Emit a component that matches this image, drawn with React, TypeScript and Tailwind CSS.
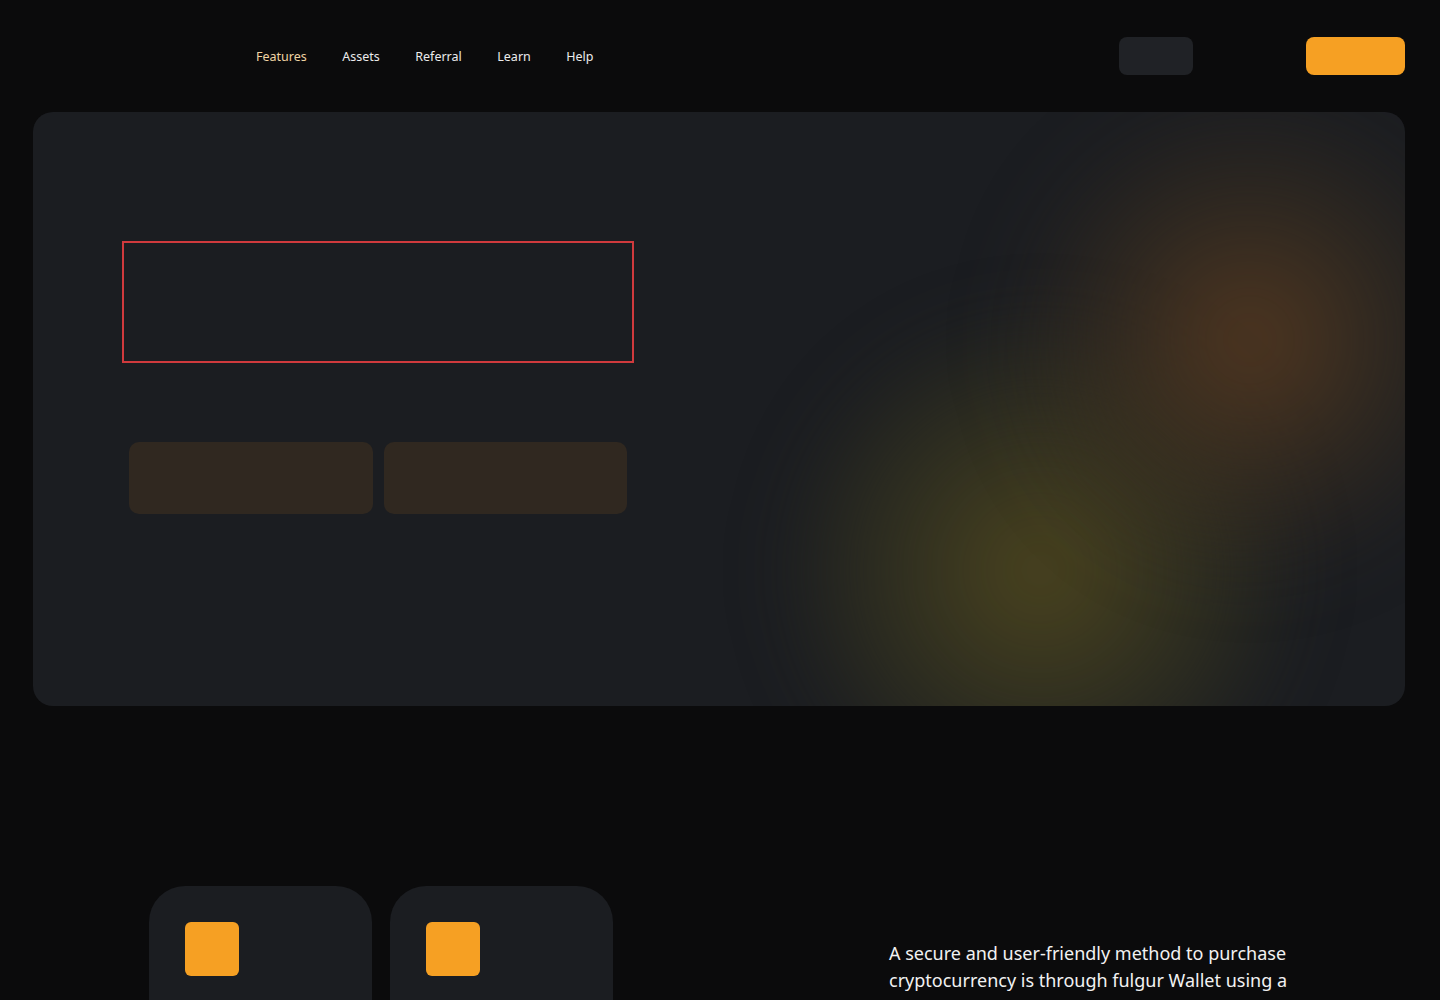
import { useState } from "react";

const links = ["Features", "Assets", "Referral", "Learn", "Help"];

function Header() {
    const [active, setActive] = useState("Features");

    return (
        <header className="h-28 flex items-center pl-[256px] pr-[35px]">
            <nav className="flex items-center gap-[35.5px] text-[12.5px] pt-[2px]">
                {links.map(link => (
                    <button
                        key={link}
                        onClick={() => setActive(link)}
                        className={link === active ? "text-[#f0d4a4]" : "text-[#ececec]"}
                    >
                        {link}
                    </button>
                ))}
            </nav>

            <div className="ml-auto flex items-center">
                <button className="w-[74px] h-[38px] rounded-lg bg-[#202226]" />
                <button className="ml-[113px] w-[99px] h-[38px] rounded-lg bg-[#f6a023]" />
            </div>
        </header>
    );
}

function Hero() {
    return (
        <section className="relative ml-[33px] mr-[35px] h-[594px] rounded-[20px] bg-[#1b1d21] overflow-hidden">
            {/* soft glow on the right side */}
            <div className="absolute left-[742px] top-[193px] w-[530px] h-[530px] rounded-full bg-[radial-gradient(circle,rgba(80,72,30,0.9)_0%,rgba(58,56,32,0.65)_40%,rgba(27,29,33,0)_72%)] blur-[30px]" />
            <div className="absolute left-[967px] top-[-22px] w-[500px] h-[500px] rounded-full bg-[radial-gradient(circle,rgba(96,62,32,0.8)_0%,rgba(68,52,32,0.5)_38%,rgba(27,29,33,0)_70%)] blur-[35px]" />

            <div className="relative pl-[89px] pt-[129px]">
                <div className="w-[512px] h-[122px] border-2 border-[#d03a3d]" />

                <div className="flex gap-[11px] ml-[7px] mt-[79px]">
                    <div className="w-[244px] h-[72px] rounded-[10px] bg-[#302820]" />
                    <div className="w-[243px] h-[72px] rounded-[10px] bg-[#302820]" />
                </div>
            </div>
        </section>
    );
}

function FeatureCard() {
    return (
        <div className="w-[223px] h-[160px] rounded-t-[36px] bg-[#1b1d21] pt-9 pl-9">
            <div className="w-[54px] h-[54px] rounded-md bg-[#f6a023]" />
        </div>
    );
}

export default function App() {
    return (
        <div className="min-h-screen bg-[#0b0b0c] text-white font-['Noto_Sans',sans-serif] overflow-hidden h-[1000px]">
            <Header />
            <Hero />

            <section className="flex mt-[180px] pl-[149px]">
                <div className="flex gap-[18px]">
                    <FeatureCard />
                    <FeatureCard />
                </div>

                <p className="ml-[276px] mt-[54px] w-[420px] text-[18px] leading-[27px] text-[#f2f2f2]">
                    A secure and user-friendly method to purchase cryptocurrency is through fulgur Wallet using a
                </p>
            </section>
        </div>
    );
}
